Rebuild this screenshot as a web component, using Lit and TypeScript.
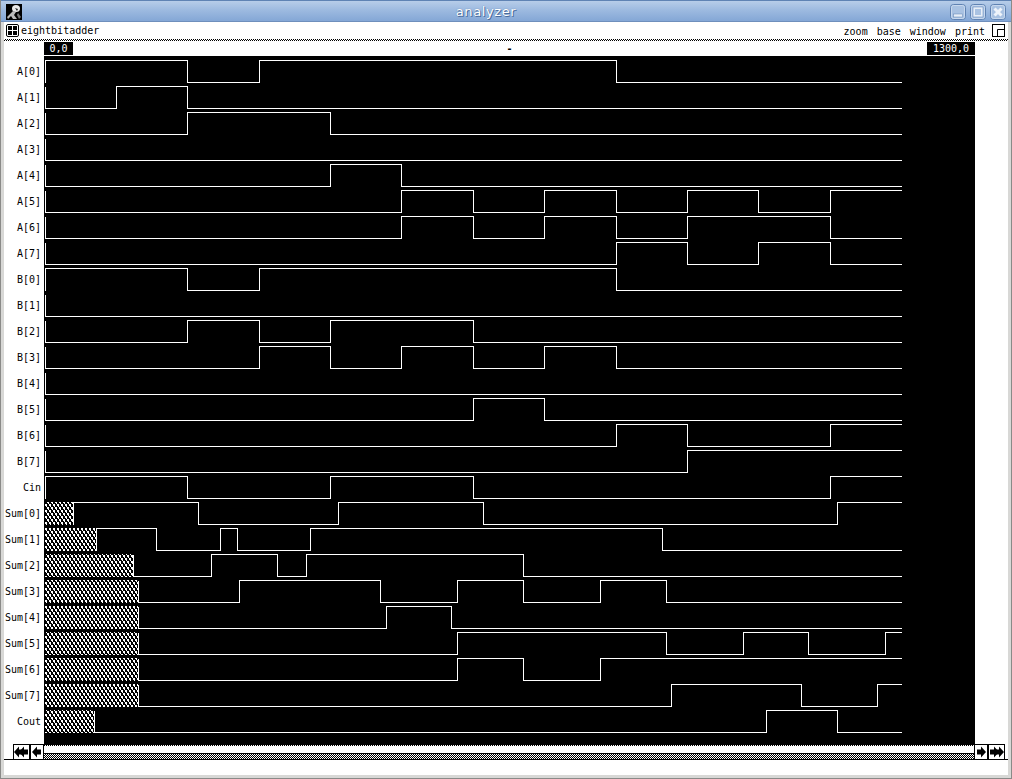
import { LitElement, css, html, svg } from 'lit'
import { customElement } from 'lit/decorators.js'

interface Signal {
  name: string
  high: boolean
  edges: number[]
  // end of the unknown (hatched) part at the start of the trace
  unknown?: number
}

const SIGNALS: Signal[] = [
  { name: 'A[0]', high: true, edges: [187, 259, 616] },
  { name: 'A[1]', high: false, edges: [116, 187] },
  { name: 'A[2]', high: false, edges: [187, 330] },
  { name: 'A[3]', high: false, edges: [] },
  { name: 'A[4]', high: false, edges: [330, 401] },
  { name: 'A[5]', high: false, edges: [401, 473, 544, 616, 687, 758, 830] },
  { name: 'A[6]', high: false, edges: [401, 473, 544, 616, 687, 830] },
  { name: 'A[7]', high: false, edges: [616, 687, 758, 830] },
  { name: 'B[0]', high: true, edges: [187, 259, 616] },
  { name: 'B[1]', high: false, edges: [] },
  { name: 'B[2]', high: false, edges: [187, 259, 330, 473] },
  { name: 'B[3]', high: false, edges: [259, 330, 401, 473, 544, 616] },
  { name: 'B[4]', high: false, edges: [] },
  { name: 'B[5]', high: false, edges: [473, 544] },
  { name: 'B[6]', high: false, edges: [616, 687, 830] },
  { name: 'B[7]', high: false, edges: [687] },
  { name: 'Cin', high: true, edges: [187, 330, 473, 830] },
  { name: 'Sum[0]', high: true, unknown: 73, edges: [198, 338, 483, 837] },
  { name: 'Sum[1]', high: true, unknown: 96, edges: [156, 220, 237, 310, 662] },
  { name: 'Sum[2]', high: false, unknown: 133, edges: [211, 277, 306, 523] },
  { name: 'Sum[3]', high: false, unknown: 138, edges: [239, 380, 457, 523, 600, 666] },
  { name: 'Sum[4]', high: false, unknown: 138, edges: [386, 451] },
  { name: 'Sum[5]', high: false, unknown: 138, edges: [457, 666, 743, 808, 885] },
  { name: 'Sum[6]', high: false, unknown: 138, edges: [457, 523, 600] },
  { name: 'Sum[7]', high: false, unknown: 138, edges: [671, 801, 877] },
  { name: 'Cout', high: false, unknown: 94, edges: [766, 837] },
]

const TRACE_START = 45
const TRACE_END = 902

function tracePath(s: Signal, row: number) {
  const top = 60.5 + row * 26
  const bottom = 82.5 + row * 26
  let level = s.high
  const x0 = (s.unknown ?? TRACE_START) + 0.5
  let d = `M${x0} ${level ? bottom : top}L${x0} ${level ? top : bottom}`
  for (const e of s.edges) {
    const x = e + 0.5
    d += `L${x} ${level ? top : bottom}L${x} ${level ? bottom : top}`
    level = !level
  }
  return d + `L${TRACE_END} ${level ? top : bottom}`
}

@customElement('app-root')
export class AppRoot extends LitElement {
  static styles = css`
    :host {
      display: block;
      width: 1012px;
      height: 779px;
      font-family: 'DejaVu Sans Mono', 'Liberation Mono', monospace;
      font-size: 10px;
      color: #000;
    }
    .window {
      width: 1012px;
      height: 779px;
      box-sizing: border-box;
      display: flex;
      flex-direction: column;
      background: #d8d8d6;
      border: solid #8a8a88;
      border-width: 0 1px 1px 1px;
      overflow: hidden;
    }
    .titlebar {
      flex: none;
      height: 22px;
      margin: 0 -1px;
      box-sizing: border-box;
      display: flex;
      align-items: center;
      padding: 1px 6px 0 6px;
      background: linear-gradient(#b7cde9, #9dbae0 45%, #84a7d6);
      border-top: 1px solid #5f83b4;
      border-bottom: 1px solid #6f8fbc;
    }
    .title {
      flex: 1;
      text-align: center;
      font: 13px 'DejaVu Sans', 'Liberation Sans', sans-serif;
      letter-spacing: 0.6px;
      color: #fff;
      text-shadow: 1px 1px 0 #4a6c9c, 0 0 1px #4a6c9c;
    }
    .winbtns {
      display: flex;
      gap: 4px;
    }
    .winbtn {
      width: 16px;
      height: 16px;
      display: block;
    }
    .client {
      flex: 1;
      margin: 0 3px 3px 3px;
      display: flex;
      flex-direction: column;
      background: #fff;
      min-height: 0;
    }
    .menubar {
      flex: none;
      height: 17px;
      box-sizing: border-box;
      display: flex;
      align-items: flex-start;
      padding: 2px 3px 0 2px;
    }
    .doc {
      display: flex;
      align-items: center;
      gap: 2px;
      line-height: 13px;
    }
    .menus {
      margin-left: auto;
      display: flex;
      align-items: flex-start;
      gap: 9px;
      line-height: 12px;
    }
    .menus span {
      margin-top: 2px;
    }
    .menus svg {
      margin-left: -2px;
    }
    .dots {
      flex: none;
      height: 2px;
      background: repeating-conic-gradient(#000 0 25%, #fff 0 50%) 0 0 / 2px 2px;
    }
    .times {
      flex: none;
      height: 13px;
      margin: 1px 33px 1px 40px;
      display: grid;
      grid-template-columns: 1fr auto 1fr;
      align-items: center;
      line-height: 13px;
    }
    .time {
      height: 13px;
      background: #000;
      color: #fff;
      text-align: center;
    }
    .time.first {
      width: 29px;
    }
    .time.last {
      width: 48px;
      justify-self: end;
    }
    .sep {
      font-weight: bold;
    }
    .main {
      flex: none;
      display: flex;
      height: 704px;
      padding-right: 33px;
    }
    .labels {
      flex: none;
      width: 37px;
      padding: 3px 3px 0 0;
      text-align: right;
      line-height: 26px;
    }
    .center {
      flex: 1;
      display: flex;
      flex-direction: column;
      min-width: 0;
    }
    .wave {
      flex: none;
      display: block;
      width: 931px;
      height: 689px;
      background: #000;
    }
    .bottom {
      display: flex;
      height: 15px;
      position: relative;
    }
    .bottom::after {
      content: '';
      position: absolute;
      left: -40px;
      right: -33px;
      bottom: 0;
      height: 1px;
      background: #000;
    }
    .scroll {
      flex: 1;
      display: flex;
      flex-direction: column;
    }
    .thumb {
      height: 7px;
      background: #fff;
      border-top: 1px dotted #000;
    }
    .track {
      flex: 1;
      background: repeating-conic-gradient(#000 0 25%, #fff 0 50%) 0 0 / 2px 2px;
      border-top: 1px solid #000;
    }
    /* step buttons hang out of the trace column, over the white margins */
    .steps {
      position: absolute;
      top: -1px;
      display: flex;
      z-index: 1;
    }
    .steps.left {
      right: 100%;
    }
    .steps.right {
      left: 100%;
      margin-left: -1px;
    }
    .steps svg {
      display: block;
    }
  `

  private renderTrace(s: Signal, row: number) {
    const top = 60 + row * 26
    return svg`
      ${s.unknown
        ? svg`<rect x="45" y=${top} width=${s.unknown - 45} height="23" fill="url(#hatch)"></rect>`
        : ''}
      <path d=${tracePath(s, row)} fill="none" stroke="#fff" stroke-width="1" shape-rendering="crispEdges"></path>
    `
  }

  private arrow(dir: 1 | -1, count: number, width: number) {
    const cx = width / 2
    const shapes = []
    for (let i = 0; i < count; i++) {
      const off = cx + (i - (count - 1) / 2) * 5 * dir
      shapes.push(
        svg`<path d="M${off + 5 * dir} 8L${off} 2.5L${off} 5.5L${off - 4 * dir} 5.5L${off - 4 * dir} 10.5L${off} 10.5L${off} 13.5Z" fill="#000"></path>`
      )
    }
    return html`<svg width=${width} height="16" viewBox="0 0 ${width} 16">
      <rect x=".5" y=".5" width=${width - 1} height="15" fill="#fff" stroke="#000"></rect>
      ${shapes}
    </svg>`
  }

  render() {
    return html`
      <div class="window">
        <div class="titlebar">
          <svg width="16" height="16" viewBox="0 0 16 16">
            <rect width="16" height="16" fill="#000"></rect>
            <ellipse cx="10" cy="4.5" rx="4" ry="3.5" fill="#e8e8e8"></ellipse>
            <path d="M7 7L10 8L8 11L11 15L7 15L5 12L2 15L1 13Z" fill="#bbb"></path>
            <path d="M12 9L15 13L13 15L11 11Z" fill="#777"></path>
            <path d="M9 4L12 5L11 7Z" fill="#222"></path>
          </svg>
          <div class="title">analyzer</div>
          <div class="winbtns">
            ${['min', 'max', 'close'].map(
              k => html`<svg class="winbtn" viewBox="0 0 16 16">
                <rect x=".5" y=".5" width="15" height="15" rx="3" fill="#a9c2e2" stroke="#5f82b2"></rect>
                <rect x="1.5" y="1.5" width="13" height="13" rx="2" fill="none" stroke="#c9d9ee"></rect>
                ${k === 'min' ? svg`<rect x="3.5" y="10" width="9" height="3" fill="#e8eff8" stroke="#5f82b2" stroke-width=".5"></rect>` : ''}
                ${k === 'max' ? svg`<rect x="4" y="4" width="8" height="8" fill="none" stroke="#e8eff8" stroke-width="2"></rect><rect x="3" y="3" width="10" height="10" fill="none" stroke="#6f90bf" stroke-width=".6"></rect>` : ''}
                ${k === 'close' ? svg`<path d="M4.5 4.5L11.5 11.5M11.5 4.5L4.5 11.5" stroke="#eef3fa" stroke-width="3"></path>` : ''}
              </svg>`
            )}
          </div>
        </div>
        <div class="client">
          <div class="menubar">
            <div class="doc">
              <svg width="13" height="13" viewBox="0 0 13 13">
                <rect x=".5" y=".5" width="12" height="12" rx="1.5" fill="#fff" stroke="#000"></rect>
                <rect x="2" y="2" width="4" height="4"></rect>
                <rect x="7" y="2" width="4" height="4"></rect>
                <rect x="2" y="7" width="4" height="4"></rect>
                <rect x="7" y="7" width="4" height="4"></rect>
              </svg>
              <span>eightbitadder</span>
            </div>
            <div class="menus">
              <span>zoom</span>
              <span>base</span>
              <span>window</span>
              <span>print</span>
              <svg width="13" height="13" viewBox="0 0 13 13">
                <rect x=".5" y=".5" width="12" height="12" fill="#fff" stroke="#000"></rect>
                <path d="M5.5 12.5V5.5H12.5" fill="none" stroke="#000"></path>
              </svg>
            </div>
          </div>
          <div class="dots"></div>
          <div class="times">
            <div class="time first">0,0</div>
            <div class="sep">-</div>
            <div class="time last">1300,0</div>
          </div>
          <div class="main">
            <div class="labels">${SIGNALS.map(s => html`<div>${s.name}</div>`)}</div>
            <div class="center">
              <svg class="wave" viewBox="44 56 931 689">
                <defs>
                  <pattern id="hatch" width="4" height="6" patternUnits="userSpaceOnUse">
                    <rect width="4" height="6" fill="#000"></rect>
                    <rect x="1" y="0" width="2" height="2" fill="#fff"></rect>
                    <rect x="2" y="2" width="1" height="1" fill="#fff"></rect>
                    <rect x="3" y="3" width="1" height="2" fill="#fff"></rect>
                    <rect x="0" y="3" width="1" height="3" fill="#fff"></rect>
                  </pattern>
                </defs>
                ${SIGNALS.map((s, i) => this.renderTrace(s, i))}
              </svg>
              <div class="bottom">
                <div class="steps left">${this.arrow(-1, 2, 17)}${this.arrow(-1, 1, 14)}</div>
                <div class="scroll">
                  <div class="thumb"></div>
                  <div class="track"></div>
                </div>
                <div class="steps right">${this.arrow(1, 1, 14)}${this.arrow(1, 2, 17)}</div>
              </div>
            </div>
          </div>
        </div>
      </div>
    `
  }
}
